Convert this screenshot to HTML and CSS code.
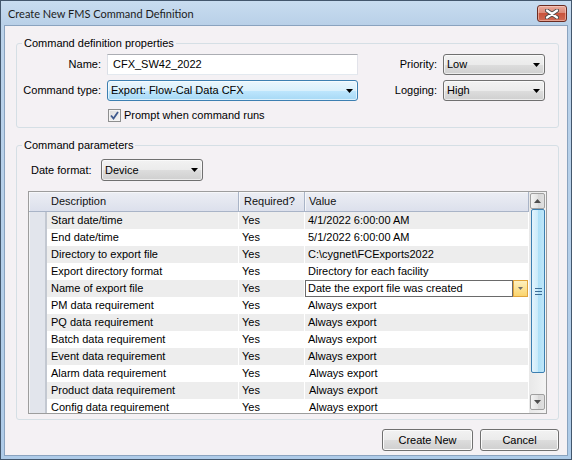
FILE: index.html
```html
<!DOCTYPE html>
<html lang="en">
<head>
<meta charset="utf-8">
<title>Create New FMS Command Definition</title>
<link rel="stylesheet" href="styles.css">
</head>
<body>
<div class="window">
  <div class="titlebar">
    <span class="title">Create New FMS Command Definition</span>
    <button class="close" aria-label="Close">
      <svg width="14" height="10" viewBox="0 0 14 10">
        <path d="M2 1.5 L12 8.5 M12 1.5 L2 8.5" stroke="#4a4a4a" stroke-width="4" stroke-linecap="round"/>
        <path d="M2 1.5 L12 8.5 M12 1.5 L2 8.5" stroke="#ffffff" stroke-width="2.2" stroke-linecap="round"/>
      </svg>
    </button>
  </div>

  <div class="client">
    <fieldset class="group">
      <legend>Command definition properties</legend>
      <div class="props">
        <span class="lbl">Name:</span>
        <div class="textbox">CFX_SW42_2022</div>
        <span class="lbl">Priority:</span>
        <div class="combo"><span>Low</span><svg class="arrow" width="7" height="4" viewBox="0 0 7 4"><path d="M0 0H7L3.5 4Z"/></svg></div>

        <span class="lbl">Command type:</span>
        <div class="combo hot"><span>Export: Flow-Cal Data CFX</span><svg class="arrow" width="7" height="4" viewBox="0 0 7 4"><path d="M0 0H7L3.5 4Z"/></svg></div>
        <span class="lbl">Logging:</span>
        <div class="combo"><span>High</span><svg class="arrow" width="7" height="4" viewBox="0 0 7 4"><path d="M0 0H7L3.5 4Z"/></svg></div>

        <label class="check-row">
          <span class="checkbox">
            <svg width="9" height="9" viewBox="0 0 9 9"><path d="M1 4.5 L3.5 7.5 L8 1" fill="none" stroke="#3f5a8e" stroke-width="1.8"/></svg>
          </span>
          <span>Prompt when command runs</span>
        </label>
      </div>
    </fieldset>

    <fieldset class="group g2">
      <legend>Command parameters</legend>
      <div class="datefmt">
        <span class="lbl2">Date format:</span>
        <div class="combo small"><span>Device</span><svg class="arrow" width="7" height="4" viewBox="0 0 7 4"><path d="M0 0H7L3.5 4Z"/></svg></div>
      </div>

      <div class="dgrid">
        <div class="table">
          <div class="hdr">
            <div class="h corner"></div>
            <div class="h desc">Description</div>
            <div class="h req">Required?</div>
            <div class="h val">Value</div>
          </div>
          <div class="row alt"><div class="rh"></div><div class="c desc">Start date/time</div><div class="c req">Yes</div><div class="c val">4/1/2022 6:00:00 AM</div></div>
          <div class="row"><div class="rh"></div><div class="c desc">End date/time</div><div class="c req">Yes</div><div class="c val">5/1/2022 6:00:00 AM</div></div>
          <div class="row alt"><div class="rh"></div><div class="c desc">Directory to export file</div><div class="c req">Yes</div><div class="c val">C:\cygnet\FCExports2022</div></div>
          <div class="row"><div class="rh"></div><div class="c desc">Export directory format</div><div class="c req">Yes</div><div class="c val">Directory for each facility</div></div>
          <div class="row alt"><div class="rh"></div><div class="c desc">Name of export file</div><div class="c req">Yes</div>
            <div class="c val editing">
              <div class="editbox">Date the export file was created</div>
              <div class="dd"><svg width="5" height="3" viewBox="0 0 5 3"><path d="M0 0H5L2.5 3Z" fill="#6d6d6d"/></svg></div>
            </div>
          </div>
          <div class="row"><div class="rh"></div><div class="c desc">PM data requirement</div><div class="c req">Yes</div><div class="c val">Always export</div></div>
          <div class="row alt"><div class="rh"></div><div class="c desc">PQ data requirement</div><div class="c req">Yes</div><div class="c val">Always export</div></div>
          <div class="row"><div class="rh"></div><div class="c desc">Batch data requirement</div><div class="c req">Yes</div><div class="c val">Always export</div></div>
          <div class="row alt"><div class="rh"></div><div class="c desc">Event data requirement</div><div class="c req">Yes</div><div class="c val">Always export</div></div>
          <div class="row"><div class="rh"></div><div class="c desc">Alarm data requirement</div><div class="c req">Yes</div><div class="c val shift">Always export</div></div>
          <div class="row alt"><div class="rh"></div><div class="c desc">Product data requirement</div><div class="c req">Yes</div><div class="c val shift">Always export</div></div>
          <div class="row"><div class="rh"></div><div class="c desc">Config data requirement</div><div class="c req">Yes</div><div class="c val shift">Always export</div></div>
        </div>

        <div class="vscroll">
          <div class="sb-btn"><svg width="7" height="4" viewBox="0 0 7 4"><path d="M0 4H7L3.5 0Z" fill="#4d4d4d"/></svg></div>
          <div class="thumb">
            <svg width="7" height="7" viewBox="0 0 7 7"><path d="M0 0.5H7M0 3.5H7M0 6.5H7" stroke="#3d6d97" stroke-width="1"/></svg>
          </div>
          <div class="sb-spacer"></div>
          <div class="sb-btn"><svg width="7" height="4" viewBox="0 0 7 4"><path d="M0 0H7L3.5 4Z" fill="#4d4d4d"/></svg></div>
        </div>
      </div>
    </fieldset>

    <div class="buttons">
      <button class="btn create">Create New</button>
      <button class="btn cancel">Cancel</button>
    </div>
  </div>
</div>
</body>
</html>
```

FILE: styles.css
```css
* {
  box-sizing: border-box;
}

body {
  margin: 0;
  font: 11px/13px "Liberation Sans", Arial, sans-serif;
  color: #000;
  background: #fff;
}

/* window chrome */
.window {
  width: 572px;
  height: 460px;
  border: 1px solid #43576d;
  background: linear-gradient(#bcd3ea, #aecbe8);
  padding: 0 3px 3px;
  display: flex;
  flex-direction: column;
}

.titlebar {
  height: 24px;
  margin: 0 -3px;
  padding: 0 4px 0 7px;
  display: flex;
  align-items: center;
  background: linear-gradient(#c8dcf0, #b9d0e8);
}

.title {
  flex: 1;
  font: 11px Lato, "Liberation Sans", sans-serif;
  color: #1c1c1c;
  padding-top: 1px;
}

.close {
  width: 30px;
  height: 17px;
  margin-top: 1px;
  padding: 0;
  border: 1px solid #6b2c22;
  border-radius: 3px;
  background: linear-gradient(#e9aa9c 0%, #dc8a78 45%, #c9533b 50%, #cf6a54 100%);
  box-shadow: inset 0 0 0 1px rgba(255, 220, 210, 0.5);
  display: flex;
  align-items: center;
  justify-content: center;
}

.client {
  flex: 1;
  background: #f4f1f4;
  border: 1px solid #8aa3bf;
  display: flex;
  flex-direction: column;
}

/* group boxes */
.group {
  margin: 11px 8px 0 11px;
  padding: 0;
  border: 1px solid #d5dfe5;
  border-radius: 3px;
  min-width: 0;
}

.group legend {
  margin-left: 5px;
  padding: 0 2px;
  line-height: 13px;
}

.g2 {
  margin-top: 11px;
}

.props {
  display: grid;
  grid-template-columns: 84px 251px 1fr 102px;
  grid-template-rows: 21px 21px auto;
  column-gap: 6px;
  row-gap: 5px;
  padding: 4px 13px 5px 0;
}

.lbl {
  text-align: right;
  align-self: center;
}

.textbox {
  border: 1px solid;
  border-color: #abadb3 #e2e3ea #e3e9ef #dbdfe6;
  background: #fff;
  padding-left: 5px;
  line-height: 19px;
}

.combo {
  border: 1px solid #707070;
  border-radius: 3px;
  background: linear-gradient(#f2f2f2 0%, #ebebeb 50%, #dddddd 51%, #cfcfcf 100%);
  box-shadow: inset 0 0 0 1px rgba(255, 255, 255, 0.6);
  padding: 0 4px 0 3px;
  display: flex;
  align-items: center;
  justify-content: space-between;
}

.combo.hot {
  border-color: #3c7fb1;
  background: linear-gradient(#eaf6fd 0%, #d9f0fc 50%, #bee6fd 51%, #a7d9f5 100%);
}

.arrow {
  flex: none;
}

.check-row {
  grid-column: 2 / 4;
  display: flex;
  align-items: center;
  gap: 3px;
  margin: 3px 0 0 1px;
}

.checkbox {
  width: 13px;
  height: 13px;
  border: 1px solid #8e8f8f;
  background: linear-gradient(135deg, #dcdcdc, #f6f6f6);
  box-shadow: inset 0 0 0 1px #f4f4f4;
  display: flex;
  align-items: center;
  justify-content: center;
}

/* command parameters */
.datefmt {
  display: flex;
  align-items: center;
  padding: 7px 0 0 14px;
}

.lbl2 {
  width: 70px;
}

.combo.small {
  width: 102px;
  height: 22px;
}

.dgrid {
  margin: 10px 11px 5px;
  height: 223px;
  border: 1px solid #9d9d9d;
  background: #fff;
  display: flex;
}

.table {
  width: 500px;
  overflow: hidden;
}

.hdr {
  display: flex;
  height: 20px;
}

.h {
  background: linear-gradient(#eceef4, #dce0ec);
  border-right: 1px solid #a9b4c7;
  border-bottom: 1px solid #a9b4c7;
  box-shadow: inset 1px 1px 0 #f6f7fa;
  line-height: 19px;
  color: #111;
}

.h.corner {
  width: 18px;
  border-right: 0;
}

.h.desc {
  width: 192px;
  padding-left: 4px;
  box-shadow: inset 0 1px 0 #f6f7fa;
}

.h.req {
  width: 66px;
  padding-left: 5px;
}

.h.val {
  width: 224px;
  padding-left: 4px;
}

.row {
  display: flex;
  height: 17px;
  line-height: 17px;
}

.rh {
  width: 18px;
  background: #e2e5ec;
  border-left: 1px solid #f2f3f6;
  border-right: 2px solid #c3c8d1;
}

.c {
  background: #fff;
  border-right: 1px solid #fff;
  white-space: nowrap;
  overflow: hidden;
}

.row.alt .c {
  background: #ededed;
}

.c.desc {
  width: 192px;
  padding-left: 4px;
}

.c.req {
  width: 66px;
  padding-left: 3px;
}

.c.val {
  width: 224px;
  padding-left: 3px;
}

.c.val.shift {
  padding-left: 4px;
}

.row.alt .c.val.editing,
.c.val.editing {
  display: flex;
  padding: 0;
  background: #fff;
}

.editbox {
  flex: 1;
  border: 1px solid #6a6a6a;
  background: #fff;
  padding-left: 2px;
  line-height: 15px;
}

.dd {
  width: 15px;
  border: 1px solid #e0a43c;
  background: linear-gradient(#fdf0c0, #fbd46c);
  display: flex;
  align-items: center;
  justify-content: center;
}

/* vertical scrollbar */
.vscroll {
  width: 17px;
  background: linear-gradient(to right, #e8e8e8, #f4f4f4);
  padding: 1px 1px 3px 1px;
  display: flex;
  flex-direction: column;
}

.sb-btn {
  height: 16px;
  border: 1px solid #9f9f9f;
  border-radius: 2px;
  background: linear-gradient(to right, #f4f4f4, #e2e2e2 50%, #d6d6d6 51%, #e0e0e0);
  display: flex;
  align-items: center;
  justify-content: center;
}

.thumb {
  height: 164px;
  margin-left: 1px;
  border: 1px solid #3c7fb1;
  border-radius: 2px;
  background: linear-gradient(to right, #e4f4fd, #c9eafa 50%, #ade0f8 51%, #bfe6f9);
  display: flex;
  align-items: center;
  justify-content: center;
}

.sb-spacer {
  flex: 1;
}

/* dialog buttons */
.buttons {
  margin-top: 9px;
  padding-right: 8px;
  display: flex;
  justify-content: flex-end;
  gap: 7px;
}

.btn {
  height: 22px;
  border: 1px solid #707070;
  border-radius: 3px;
  background: linear-gradient(#f2f2f2 0%, #ebebeb 48%, #dddddd 50%, #cfcfcf 100%);
  box-shadow: inset 0 0 0 1px #fbfbfb;
  font: 11px "Liberation Sans", Arial, sans-serif;
  color: #000;
  padding: 0;
}

.btn.create {
  width: 91px;
}

.btn.cancel {
  width: 79px;
}
```
